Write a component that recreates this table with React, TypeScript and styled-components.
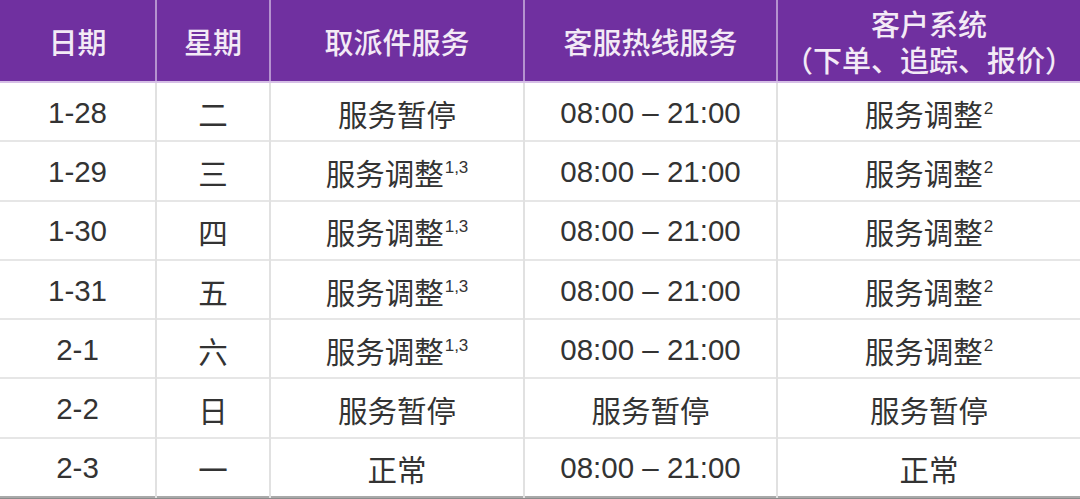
import React from 'react';
import styled, { createGlobalStyle } from 'styled-components';

const GlobalStyle = createGlobalStyle`
    html, body {
        margin: 0;
        padding: 0;
        background: #ffffff;
    }
    body {
        font-family: "Liberation Sans", "Noto Sans CJK SC", sans-serif;
    }
`

type Row = {
    date: string;
    day: string;
    pickup: string;
    pickupNote?: string;
    hotline: string;
    system: string;
    systemNote?: string;
};

const HOURS = '08:00 – 21:00';

const rows: Row[] = [
    { date: '1-28', day: '二', pickup: '服务暂停', hotline: HOURS, system: '服务调整', systemNote: '2' },
    { date: '1-29', day: '三', pickup: '服务调整', pickupNote: '1,3', hotline: HOURS, system: '服务调整', systemNote: '2' },
    { date: '1-30', day: '四', pickup: '服务调整', pickupNote: '1,3', hotline: HOURS, system: '服务调整', systemNote: '2' },
    { date: '1-31', day: '五', pickup: '服务调整', pickupNote: '1,3', hotline: HOURS, system: '服务调整', systemNote: '2' },
    { date: '2-1', day: '六', pickup: '服务调整', pickupNote: '1,3', hotline: HOURS, system: '服务调整', systemNote: '2' },
    { date: '2-2', day: '日', pickup: '服务暂停', hotline: '服务暂停', system: '服务暂停' },
    { date: '2-3', day: '一', pickup: '正常', hotline: HOURS, system: '正常' },
];

const widths = [156, 114, 254, 253, 303];

export default function App() {
    return (
        <>
            <GlobalStyle />
            <Page>
                <Table>
                    <colgroup>
                        {widths.map((w, i) => <col key={i} style={{ width: w }} />)}
                    </colgroup>
                    <thead>
                        <tr>
                            <HeadCell>日期</HeadCell>
                            <HeadCell>星期</HeadCell>
                            <HeadCell>取派件服务</HeadCell>
                            <HeadCell>客服热线服务</HeadCell>
                            <HeadCell>
                                <HeadLine>客户系统</HeadLine>
                                <HeadLine>（下单、追踪、报价）</HeadLine>
                            </HeadCell>
                        </tr>
                    </thead>
                    <tbody>
                        {rows.map((r) => (
                            <BodyRow key={r.date}>
                                <Cell>{r.date}</Cell>
                                <Cell>{r.day}</Cell>
                                <Cell>
                                    {r.pickup}
                                    {r.pickupNote && <Note>{r.pickupNote}</Note>}
                                </Cell>
                                <Cell>{r.hotline}</Cell>
                                <Cell>
                                    {r.system}
                                    {r.systemNote && <Note>{r.systemNote}</Note>}
                                </Cell>
                            </BodyRow>
                        ))}
                    </tbody>
                </Table>
            </Page>
        </>
    );
}

const Page = styled.div`
    width: 1080px;
    height: 499px;
    overflow: hidden;
    background: #8c8c8c;
`

const Table = styled.table`
    width: 1080px;
    table-layout: fixed;
    border-collapse: collapse;
    background: #ffffff;
    border-bottom: 2px solid #a9a9a9;
`

const HeadCell = styled.th`
    height: 81px;
    padding: 0;
    background: #7030a0;
    color: #f3eaf6;
    font-family: "Noto Sans CJK SC", sans-serif;
    font-weight: 500;
    font-size: 29px;
    line-height: 36px;
    text-align: center;
    vertical-align: middle;
    border-left: 2px solid #b592cf;
    border-bottom: 2px solid #d6bfe6;
    &:first-child {
        border-left: none;
    }
`

const HeadLine = styled.div`
    white-space: nowrap;
`

const BodyRow = styled.tr`
    height: 59.3px;
`

const Cell = styled.td`
    padding: 0;
    padding-top: 2px;
    color: #333333;
    font-size: 29.5px;
    text-align: center;
    vertical-align: middle;
    white-space: nowrap;
    border-left: 2px solid #e1e1e1;
    border-top: 2px solid #e6e6e6;
    &:first-child {
        border-left: none;
    }
`

const Note = styled.sup`
    font-family: "Liberation Sans", sans-serif;
    font-size: 17px;
    vertical-align: 12px;
    margin-left: 1px;
`
